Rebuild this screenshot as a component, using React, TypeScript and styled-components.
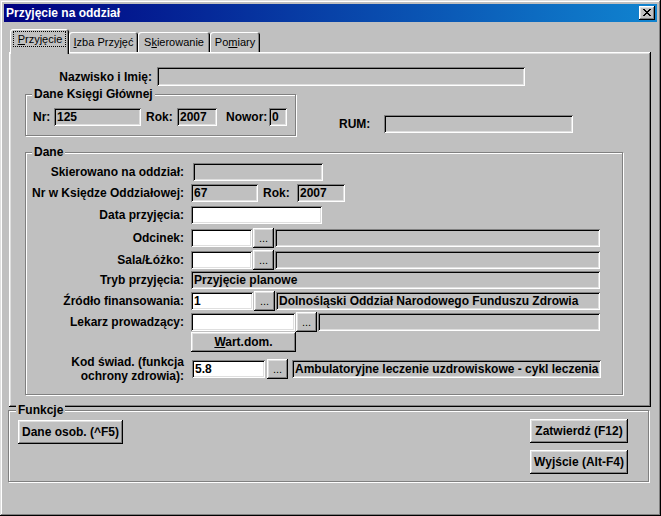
import React from 'react';
import styled, { createGlobalStyle, css } from 'styled-components';

const GlobalStyle = createGlobalStyle`
  html, body { margin: 0; padding: 0; background: #c0c0c0; }
  body { font-family: "Liberation Sans", Arial, sans-serif; font-size: 11px; color: #000; }
  * { box-sizing: border-box; }
`;

const raised = css`
  box-shadow: inset -1px -1px #000, inset 1px 1px #fff, inset -2px -2px #808080, inset 2px 2px #dfdfdf;
`;

const sunken = css`
  box-shadow: inset 1px 1px #808080, inset -1px -1px #fff, inset 2px 2px #000, inset -2px -2px #dfdfdf;
`;

const boldText = css`
  font-weight: bold;
  font-size: 12px;
`;

const Window = styled.div`
  width: 661px;
  height: 516px;
  background: #c0c0c0;
  padding: 4px;
  display: flex;
  flex-direction: column;
  box-shadow: inset -1px -1px #000, inset 1px 1px #dfdfdf, inset -2px -2px #808080, inset 2px 2px #fff;
`;

const TitleBar = styled.div`
  height: 18px;
  display: flex;
  align-items: center;
  justify-content: space-between;
  padding: 0 2px 0 2px;
  background: linear-gradient(90deg, #000080, #1084d0);
  color: #fff;
  ${boldText}
`;

const CloseButton = styled.div`
  width: 16px;
  height: 14px;
  background: #c0c0c0;
  display: flex;
  align-items: center;
  justify-content: center;
  padding-bottom: 1px;
  ${raised}
`;

const TabStrip = styled.div`
  display: flex;
  align-items: flex-end;
  height: 23px;
  margin: 7px 0 0 6px;
`;

const Tab = styled.div<{ $active?: boolean; $w: number }>`
  width: ${p => p.$w}px;
  height: ${p => (p.$active ? 25 : 20)}px;
  margin-bottom: ${p => (p.$active ? -2 : 0)}px;
  position: relative;
  z-index: ${p => (p.$active ? 1 : 0)};
  display: flex;
  align-items: ${p => (p.$active ? 'flex-start' : 'center')};
  justify-content: center;
  padding-top: ${p => (p.$active ? 3 : 0)}px;
  background: #c0c0c0;
  border-radius: 3px 3px 0 0;
  box-shadow: inset 1px 1px #fff, inset -1px 0 #000, inset -2px 0 #808080;
`;

const FocusText = styled.span`
  outline: 1px dotted #000;
  padding: 1px 3px 1px 4px;
`;

const U = styled.span`
  text-decoration: underline;
`;

const Panel = styled.div`
  margin-left: 5px;
  width: 642px;
  height: 355px;
  padding-top: 15px;
  ${raised}
`;

const Row = styled.div<{ $mt?: number; $ml?: number }>`
  display: flex;
  align-items: center;
  margin-top: ${p => p.$mt ?? 0}px;
  margin-left: ${p => p.$ml ?? 0}px;
`;

const Label = styled.div<{ $w?: number; $ml?: number; $mr?: number; $left?: boolean }>`
  ${boldText}
  white-space: nowrap;
  text-align: ${p => (p.$left ? 'left' : 'right')};
  width: ${p => (p.$w ? `${p.$w}px` : 'auto')};
  margin-left: ${p => p.$ml ?? 0}px;
  margin-right: ${p => p.$mr ?? 0}px;
  line-height: 14px;
  flex-shrink: 0;
`;

const Field = styled.div<{ $w: number; $h?: number; $ml?: number; $white?: boolean }>`
  width: ${p => p.$w}px;
  height: ${p => p.$h ?? 18}px;
  line-height: ${p => p.$h ?? 18}px;
  margin-left: ${p => p.$ml ?? 0}px;
  padding-left: 3px;
  background: ${p => (p.$white ? '#fff' : '#c0c0c0')};
  ${boldText}
  white-space: nowrap;
  overflow: hidden;
  flex-shrink: 0;
  ${sunken}
`;

const Button = styled.div<{ $w: number; $h?: number; $ml?: number; $mt?: number; $plain?: boolean }>`
  width: ${p => p.$w}px;
  height: ${p => p.$h ?? 24}px;
  margin-left: ${p => p.$ml ?? 0}px;
  margin-top: ${p => p.$mt ?? 0}px;
  display: flex;
  align-items: center;
  justify-content: center;
  background: #c0c0c0;
  font-weight: ${p => (p.$plain ? 'normal' : 'bold')};
  font-size: ${p => (p.$plain ? 11 : 12)}px;
  white-space: nowrap;
  flex-shrink: 0;
  ${raised}
`;

const Group = styled.fieldset<{ $w: number; $h: number; $ml?: number; $mt?: number }>`
  width: ${p => p.$w}px;
  height: ${p => p.$h}px;
  margin: ${p => p.$mt ?? 0}px 0 0 ${p => p.$ml ?? 0}px;
  padding: 0;
  min-width: 0;
  border: 1px solid #808080;
  box-shadow: inset 1px 1px #fff, 1px 1px #fff;
  flex-shrink: 0;
`;

const Legend = styled.legend<{ $ml?: number }>`
  margin-left: ${p => p.$ml ?? 6}px;
  padding: 0 2px 0 2px;
  ${boldText}
  line-height: 13px;
  background: #c0c0c0;
`;

const TopLine = styled.div`
  display: flex;
  align-items: flex-start;
`;

const ButtonColumn = styled.div`
  display: flex;
  flex-direction: column;
  gap: 7px;
`;

const FunctionsBody = styled.div`
  display: flex;
  justify-content: space-between;
  align-items: flex-start;
  padding: 2px 20px 0 9px;
`;

const Dots = ({ ml }: { ml: number }) => (
  <Button $w={21} $h={20} $ml={ml} $plain>...</Button>
);

const CloseGlyph = () => (
  <svg width="8" height="7" viewBox="0 0 8 7" shapeRendering="crispEdges">
    <path d="M0 0h2v1h-2zM6 0h2v1h-2zM1 1h2v1h-2zM5 1h2v1h-2zM2 2h4v1h-4zM3 3h2v1h-2zM2 4h4v1h-4zM1 5h2v1h-2zM5 5h2v1h-2zM0 6h2v1h-2zM6 6h2v1h-2z" fill="#000" />
  </svg>
);

const LABEL_W = 158;

export default function App() {
  return (
    <>
      <GlobalStyle />
      <Window>
        <TitleBar>
          <span>Przyjęcie na oddział</span>
          <CloseButton><CloseGlyph /></CloseButton>
        </TitleBar>

        <TabStrip>
          <Tab $active $w={59}><FocusText><U>P</U>rzyjęcie</FocusText></Tab>
          <Tab $w={69}><span><U>I</U>zba Przyjęć</span></Tab>
          <Tab $w={72}><span>S<U>k</U>ierowanie</span></Tab>
          <Tab $w={50}><span>Po<U>m</U>iary</span></Tab>
        </TabStrip>

        <Panel>
          <Row>
            <Label $w={143} $mr={5}>Nazwisko i Imię:</Label>
            <Field $w={368} $h={19} />
          </Row>

          <TopLine>
            <Group $w={271} $h={48} $ml={16} $mt={2}>
              <Legend>Dane Księgi Głównej</Legend>
              <Row $mt={7} $ml={7}>
                <Label $left $w={21}>Nr:</Label>
                <Field $w={87}>125</Field>
                <Label $left $w={30} $ml={5}>Rok:</Label>
                <Field $w={40} $ml={1}>2007</Field>
                <Label $left $w={41} $ml={9}>Nowor:</Label>
                <Field $w={18} $ml={2}>0</Field>
              </Row>
            </Group>
            <Row $mt={29} $ml={43}>
              <Label $left $w={45}>RUM:</Label>
              <Field $w={189} />
            </Row>
          </TopLine>

          <Group $w={598} $h={249} $ml={16} $mt={10}>
            <Legend>Dane</Legend>
            <Row $mt={4}>
              <Label $w={LABEL_W} $mr={7}>Skierowano na oddział:</Label>
              <Field $w={130} $ml={2} />
            </Row>
            <Row $mt={3}>
              <Label $w={LABEL_W} $mr={7}>Nr w Księdze Oddziałowej:</Label>
              <Field $w={67}>67</Field>
              <Label $left $w={29} $ml={5}>Rok:</Label>
              <Field $w={48} $ml={5}>2007</Field>
            </Row>
            <Row $mt={4}>
              <Label $w={LABEL_W} $mr={7}>Data przyjęcia:</Label>
              <Field $w={131} $white />
            </Row>
            <Row $mt={4}>
              <Label $w={LABEL_W} $mr={7}>Odcinek:</Label>
              <Field $w={61} $white />
              <Dots ml={1} />
              <Field $w={325} $ml={1} />
            </Row>
            <Row $mt={2}>
              <Label $w={LABEL_W} $mr={7}>Sala/Łóżko:</Label>
              <Field $w={61} $white />
              <Dots ml={1} />
              <Field $w={325} $ml={1} />
            </Row>
            <Row $mt={1}>
              <Label $w={LABEL_W} $mr={7}>Tryb przyjęcia:</Label>
              <Field $w={409}>Przyjęcie planowe</Field>
            </Row>
            <Row $mt={2}>
              <Label $w={LABEL_W} $mr={7}>Źródło finansowania:</Label>
              <Field $w={62} $white>1</Field>
              <Dots ml={1} />
              <Field $w={324} $ml={1}>Dolnośląski Oddział Narodowego Funduszu Zdrowia</Field>
            </Row>
            <Row $mt={1}>
              <Label $w={LABEL_W} $mr={7}>Lekarz prowadzący:</Label>
              <Field $w={104} $white />
              <Dots ml={1} />
              <Field $w={282} $ml={1} />
            </Row>
            <Row>
              <Label $w={LABEL_W} $mr={7} />
              <Button $w={105} $h={20}><span><U>W</U>art.dom.</span></Button>
            </Row>
            <Row $mt={3}>
              <Label $w={LABEL_W} $mr={7}>Kod świad. (funkcja<br />ochrony zdrowia):</Label>
              <Field $w={73} $ml={1} $white>5.8</Field>
              <Dots ml={2} />
              <Field $w={309} $ml={4}>Ambulatoryjne leczenie uzdrowiskowe - cykl leczenia</Field>
            </Row>
          </Group>
        </Panel>

        <Group $w={641} $h={78} $ml={4} $mt={-3}>
          <Legend $ml={7}>Funkcje</Legend>
          <FunctionsBody>
            <Button $w={105} $h={24} $mt={1}>Dane osob. (^F5)</Button>
            <ButtonColumn>
              <Button $w={98} $h={24}>Zatwierdź (F12)</Button>
              <Button $w={98} $h={24}>Wyjście (Alt-F4)</Button>
            </ButtonColumn>
          </FunctionsBody>
        </Group>
      </Window>
    </>
  );
}
